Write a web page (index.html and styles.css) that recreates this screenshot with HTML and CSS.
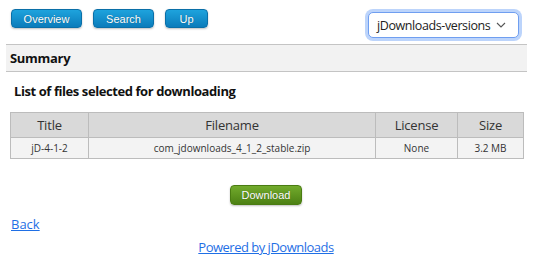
FILE: index.html
```html
<!DOCTYPE html>
<html>
<head>
<meta charset="utf-8">
<link rel="stylesheet" href="styles.css">
</head>
<body>
<div class="page">
  <div class="topbar">
    <div class="nav">
      <a class="btn btn-blue" href="#">Overview</a>
      <a class="btn btn-blue" href="#">Search</a>
      <a class="btn btn-blue" href="#">Up</a>
    </div>
    <div class="select-wrap">
      <span class="select-text">jDownloads-versions</span>
      <svg class="chev" width="10" height="6" viewBox="0 0 10 6"><path d="M1 1l4 4 4-4" fill="none" stroke="#555" stroke-width="1.1"/></svg>
    </div>
  </div>
  <div class="summary">Summary</div>
  <h3 class="list-title">List of files selected for downloading</h3>
  <table class="files">
    <colgroup>
      <col class="c1"><col class="c2"><col class="c3"><col class="c4">
    </colgroup>
    <thead>
      <tr><th>Title</th><th>Filename</th><th>License</th><th>Size</th></tr>
    </thead>
    <tbody>
      <tr><td>jD-4-1-2</td><td>com_jdownloads_4_1_2_stable.zip</td><td>None</td><td>3.2 MB</td></tr>
    </tbody>
  </table>
  <div class="dl-row"><a class="btn btn-green" href="#">Download</a></div>
  <div class="back"><a href="#">Back</a></div>
  <div class="powered"><a href="#">Powered by jDownloads</a></div>
</div>
</body>
</html>
```
FILE: styles.css
```css
html, body { margin: 0; padding: 0; background: #fff; }
body { font-family: "Open Sans", "Noto Sans", sans-serif; color: #222; }
.page { width: 536px; }
.topbar { display: flex; justify-content: space-between; align-items: flex-start; padding: 9px 14px 0 11px; height: 40px; box-sizing: border-box; }
.nav { display: flex; gap: 11px; }
.btn { display: inline-flex; align-items: center; justify-content: center; height: 19px; box-sizing: border-box; border-radius: 4px; font-family: "Liberation Sans", Arial, sans-serif; font-size: 11px; color: #fff; text-decoration: none; text-shadow: 0 0 1px rgba(0,0,0,0.35); }
.btn-blue { background: linear-gradient(#1ea3dd, #0b7cbb); border: 1px solid #0a6fa8; box-shadow: 0 1px 2px rgba(0,0,0,0.25); }
.nav .btn:nth-child(1) { width: 71px; }
.nav .btn:nth-child(2) { width: 61px; }
.nav .btn:nth-child(3) { width: 43px; }
.select-wrap { margin: 3px 3px 0 0; width: 151px; height: 26px; box-sizing: border-box; border: 1px solid #6f9ef0; border-radius: 5px; box-shadow: 0 0 0 3px #bcd4fb; display: flex; align-items: center; justify-content: space-between; padding: 0 12px 0 8px; background: #fff; }
.select-text { font-family: "Open Sans", sans-serif; font-size: 12.5px; color: #222; letter-spacing: -0.4px; white-space: nowrap; }
.summary { margin: 4px 9px 0 6px; height: 28px; box-sizing: border-box; background: #f2f2f2; border-top: 1px solid #c4c4c4; border-bottom: 1px solid #c4c4c4; padding-left: 4px; font-weight: bold; font-size: 13px; line-height: 26px; color: #111; letter-spacing: -0.3px; }
.list-title { margin: 0; padding: 10px 0 0 14px; height: 40px; box-sizing: border-box; font-size: 13px; font-weight: bold; line-height: 18px; color: #111; letter-spacing: -0.42px; }
.files { margin-left: 10px; width: 513px; border-collapse: collapse; table-layout: fixed; }
.c1 { width: 78px; } .c2 { width: 287px; } .c3 { width: 82px; } .c4 { width: 66px; }
.files th, .files td { border: 1px solid #bcbcbc; text-align: center; padding: 0; color: #333; }
.files th { background: #d9d9d9; font-weight: normal; font-size: 13px; height: 24px; letter-spacing: -0.2px; }
.files td { background: #f3f3f3; font-size: 10px; height: 20px; }
.dl-row { display: flex; justify-content: center; padding: 26px 0 0 0; margin-left: -4px; }
.btn-green { width: 72px; height: 20px; background: linear-gradient(#72ab2c, #4d8114); border: 1px solid #4a7c12; box-shadow: 0 1px 2px rgba(0,0,0,0.25); }
.back { padding: 11px 0 0 11px; font-size: 13px; line-height: 16px; }
.powered { text-align: center; padding: 7px 0 0 0; font-size: 13px; line-height: 16px; margin-left: -4px; letter-spacing: -0.5px; }
a { color: #1f6fe5; }
```
